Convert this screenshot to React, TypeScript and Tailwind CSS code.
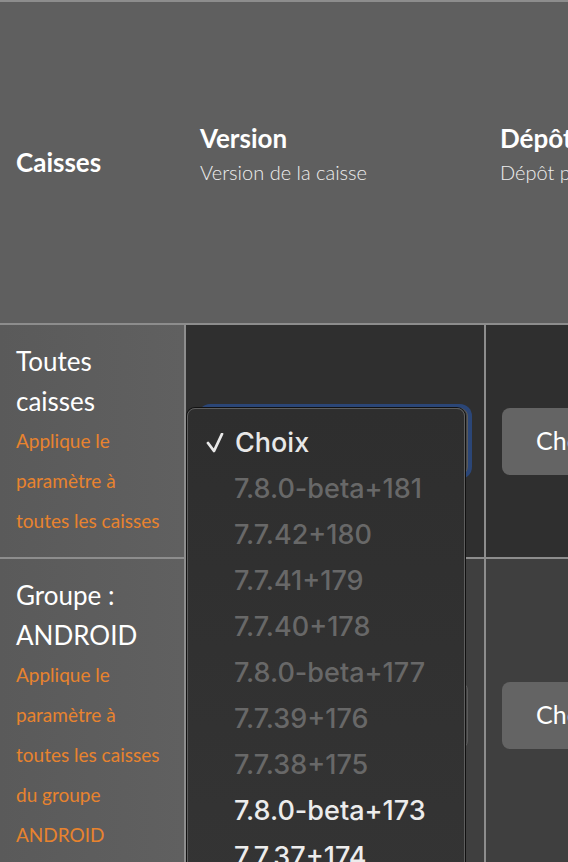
import React from 'react';

const versions = [
  { label: '7.8.0-beta+181', enabled: false },
  { label: '7.7.42+180', enabled: false },
  { label: '7.7.41+179', enabled: false },
  { label: '7.7.40+178', enabled: false },
  { label: '7.8.0-beta+177', enabled: false },
  { label: '7.7.39+176', enabled: false },
  { label: '7.7.38+175', enabled: false },
  { label: '7.8.0-beta+173', enabled: true },
  { label: '7.7.37+174', enabled: true },
];

const rows = [
  {
    title: ['Toutes', 'caisses'],
    hint: ['Applique le', 'paramètre à', 'toutes les caisses'],
    bg: 'bg-[#2f2f2f]',
    focused: true,
  },
  {
    title: ['Groupe :', 'ANDROID'],
    hint: ['Applique le', 'paramètre à', 'toutes les caisses', 'du groupe', 'ANDROID'],
    bg: 'bg-[#3f3f3f]',
    focused: false,
  },
];

const App: React.FC = () => {
  return (
    <div className="relative w-[568px] h-[862px] overflow-hidden bg-[#8d8d8d] pt-[2px] font-['Lato',sans-serif] text-white">
      {/* Header */}
      <div className="flex h-[321px] bg-[#5f5f5f] whitespace-nowrap">
        <div className="w-[184px] shrink-0 px-4 flex items-center">
          <span className="text-[26px] font-bold">Caisses</span>
        </div>
        <div className="w-[300px] shrink-0 px-4 pb-4 flex flex-col justify-center">
          <span className="text-[26px] font-bold leading-[34px]">Version</span>
          <span className="text-[20px] font-light leading-[34px] text-[#eeeeee]">Version de la caisse</span>
        </div>
        <div className="w-[320px] shrink-0 px-4 pb-4 flex flex-col justify-center">
          <span className="text-[26px] font-bold leading-[34px]">Dépôt</span>
          <span className="text-[20px] font-light leading-[34px] text-[#eeeeee]">Dépôt principal de la caisse</span>
        </div>
      </div>

      <div className="grid grid-cols-[184px_298px_320px] gap-[2px] mt-[2px]">
        {rows.map((row, i) => (
          <React.Fragment key={i}>
            <div className="bg-gradient-to-r from-[#5a5a5a] to-[#606060] p-4">
              {row.title.map((t) => (
                <div key={t} className="text-[26px] leading-[40px]">{t}</div>
              ))}
              {row.hint.map((t) => (
                <div key={t} className="text-[19px] leading-[40px] text-[#e8832e] whitespace-nowrap">{t}</div>
              ))}
            </div>
            <div className={`${row.bg} px-4 flex items-center`}>
              <div
                className={`w-full h-[67px] rounded-lg bg-[#454545] border border-[#5a5a5a] ${
                  row.focused ? 'ring-4 ring-[#2b4677]' : ''
                }`}
              />
            </div>
            <div className={`${row.bg} px-4 flex items-center`}>
              <button className="h-[67px] w-[140px] rounded-lg bg-[#646464] pl-[34px] text-left text-[25px] text-white">
                Choix
              </button>
            </div>
          </React.Fragment>
        ))}
      </div>

      {/* Open dropdown menu */}
      <div className="absolute left-[187px] top-[408px] w-[278px] h-[480px] rounded-lg border border-[#5e5e5e] shadow-[0_0_0_1px_#111] bg-gradient-to-b from-[#2e2e2e] to-[#343434] pt-[11px] font-['Inter',sans-serif] font-medium">
        <div className="flex items-center h-[46px] pl-[18px]">
          <svg width="18" height="20" viewBox="0 0 18 20" className="mr-[11px]">
            <polyline points="2,10 8,18 16,1" fill="none" stroke="#e8e8e8" strokeWidth="2.8" strokeLinecap="round" strokeLinejoin="round" />
          </svg>
          <span className="text-[27px] text-[#e8e8e8]">Choix</span>
        </div>
        {versions.map((v) => (
          <div key={v.label} className="flex items-center h-[46px] pl-[46px]">
            <span className={`text-[27px] ${v.enabled ? 'text-[#ececec]' : 'text-[#686868]'}`}>{v.label}</span>
          </div>
        ))}
      </div>
    </div>
  );
};

export default App;
